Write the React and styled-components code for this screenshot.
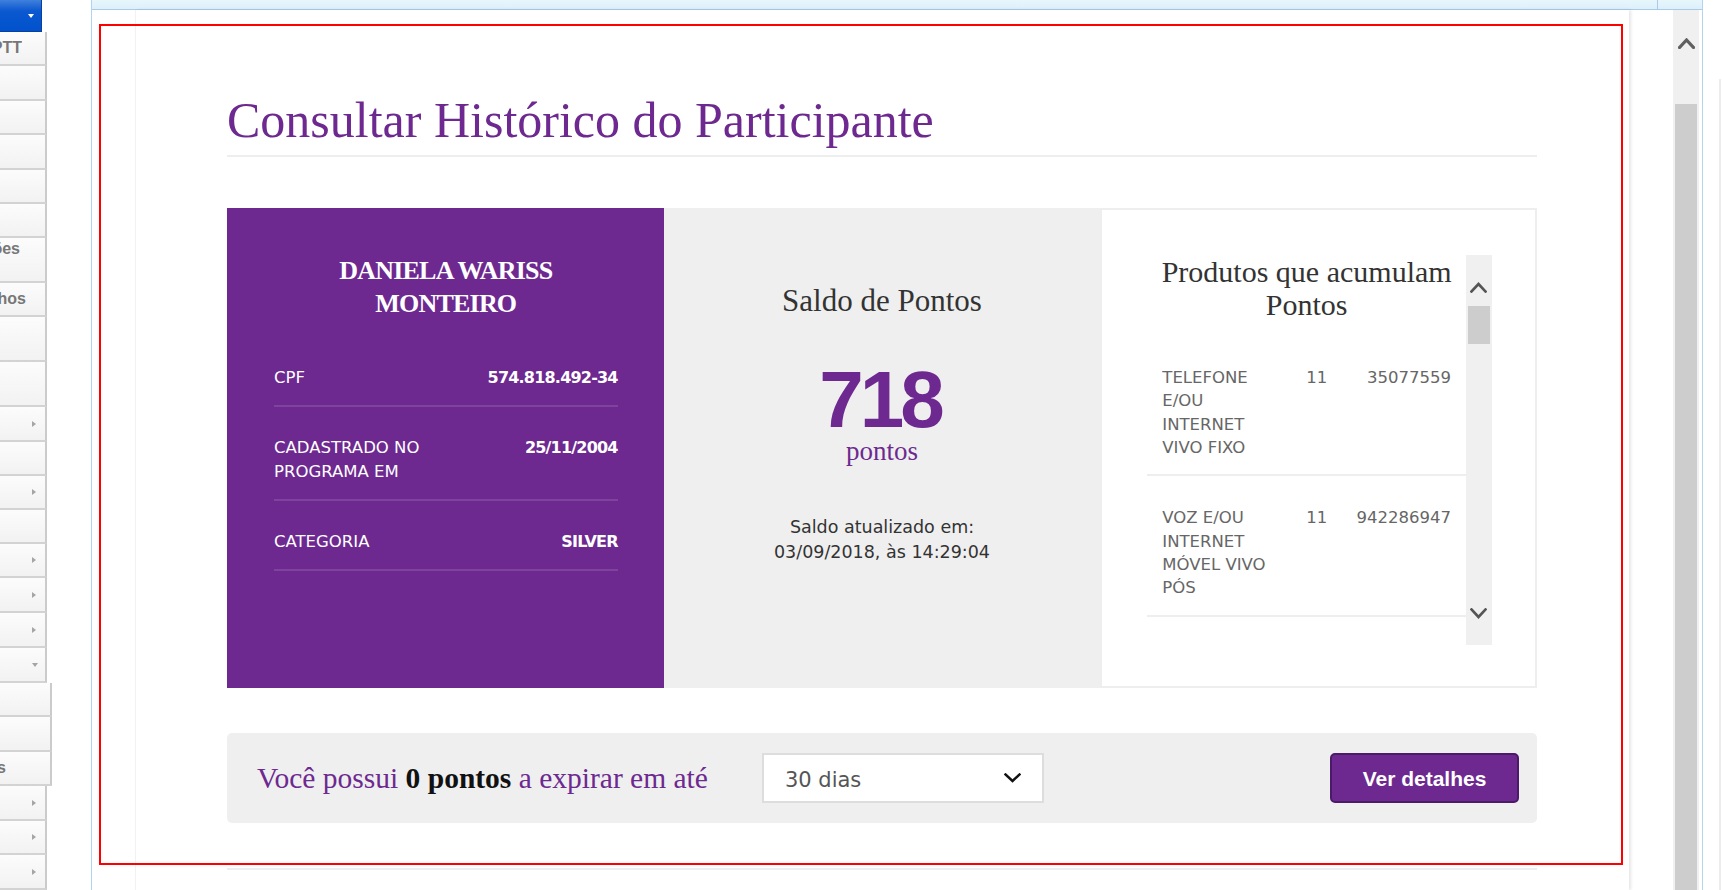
import React from "react";
import styled, { createGlobalStyle } from "styled-components";

const PURPLE = "#6d2990";
const SERIF = `"Liberation Serif", "Times New Roman", serif`;
const SANS = `"DejaVu Sans", Verdana, sans-serif`;
const ARIAL = `"Liberation Sans", Arial, sans-serif`;

const GlobalStyle = createGlobalStyle`
  html, body { margin: 0; padding: 0; background: #fff; }
  body { font-family: ${SANS}; }
  * { box-sizing: border-box; }
`;

const Page = styled.div`
  position: relative;
  display: flex;
  width: 1722px;
  height: 890px;
  overflow: hidden;
  background: #fff;
`;

/* ---------- left menu ---------- */
const Sidebar = styled.nav`
  width: 52px;
  flex: none;
  display: flex;
  flex-direction: column;
  align-items: flex-start;
`;

const MenuButton = styled.div`
  width: 42px;
  height: 32px;
  flex: none;
  background: linear-gradient(#3f80dc, #0b58d0 35%, #0052cc);
  border-right: 1px solid #0a3f9a;
  border-bottom: 1px solid #0a3f9a;
  display: flex;
  justify-content: flex-end;
  align-items: center;
  padding-right: 7px;
`;

const WhiteCaret = styled.span`
  width: 0;
  height: 0;
  border-left: 3.5px solid transparent;
  border-right: 3.5px solid transparent;
  border-top: 4px solid #fff;
  margin-top: 1px;
`;

const MenuItem = styled.div`
  flex: none;
  height: ${(p) => p.$h}px;
  width: ${(p) => (p.$wide ? 52 : 47)}px;
  background: linear-gradient(#fcfcfc, #f2f2f2);
  border-bottom: 2px solid #d3d3d3;
  border-right: 2px solid #cbcbcb;
  display: flex;
  align-items: ${(p) => (p.$top !== undefined ? "flex-start" : "center")};
  padding-top: ${(p) => p.$top || 0}px;
`;

const MenuLabel = styled.span`
  width: ${(p) => p.$w}px;
  flex: none;
  overflow: hidden;
  display: flex;
  justify-content: flex-end;
  white-space: nowrap;
  font: bold 16px/18px ${ARIAL};
  color: #777;
`;

const MenuArrow = styled.span`
  margin-left: auto;
  margin-right: 9px;
  width: 0;
  height: 0;
  border-top: 3.5px solid transparent;
  border-bottom: 3.5px solid transparent;
  border-left: 4px solid #a5a5a5;
`;

const MenuCaret = styled.span`
  margin-left: auto;
  margin-right: 7px;
  width: 0;
  height: 0;
  border-left: 3.5px solid transparent;
  border-right: 3.5px solid transparent;
  border-top: 4px solid #a5a5a5;
`;

/* ---------- frame ---------- */
const Frame = styled.div`
  margin-left: 39px;
  width: 1612px;
  flex: none;
  border-left: 1px solid #b3d3ef;
  border-right: 1px solid #b3d3ef;
  display: flex;
  flex-direction: column;
`;

const FrameTop = styled.div`
  height: 10px;
  flex: none;
  display: flex;
`;

const TopTab = styled.div`
  flex: ${(p) => (p.$end ? "0 0 45px" : "1")};
  background: linear-gradient(#e8f6fc, #dcf0fa);
  border-bottom: 1px solid #a9cbe9;
  border-left: ${(p) => (p.$end ? "1px solid #a9cbe9" : "none")};
`;

const FrameBody = styled.div`
  flex: 1;
  min-height: 0;
  display: flex;
  padding-left: 43px;
`;

const Column = styled.main`
  width: 1494px;
  flex: none;
  border-left: 1px solid #f2f2f2;
  box-shadow: 2px 0 3px rgba(0, 0, 0, 0.1);
  padding: 80px 92px 0 91px;
  display: flex;
  flex-direction: column;
`;

const ColumnGap = styled.div`
  width: 44px;
  flex: none;
`;

const PageScrollbar = styled.div`
  width: 26px;
  flex: none;
  background: #f0f0f0;
  display: flex;
  flex-direction: column;
  align-items: center;
`;

const PageThumb = styled.div`
  width: 22px;
  flex: 1;
  margin-top: 55px;
  background: #cdcdcd;
`;

const RightStrip = styled.div`
  flex: 1;
  padding: 79px 0 0 16px;
  display: flex;
`;

const StripLine = styled.div`
  width: 2px;
  background: #ececec;
`;

/* ---------- content ---------- */
const Title = styled.h1`
  margin: 0;
  font: 50px/60px ${SERIF};
  color: ${PURPLE};
  padding-bottom: 5px;
  border-bottom: 2px solid #eeeeee;
`;

const Cards = styled.div`
  margin-top: 51px;
  height: 480px;
  display: grid;
  grid-template-columns: repeat(3, minmax(0, 1fr));
`;

const ProfileCol = styled.section`
  background: ${PURPLE};
  padding: 46px 46px 0 47px;
  color: #fff;
`;

const ProfileName = styled.h2`
  margin: 0 0 17px;
  font: bold 26px/33px ${SERIF};
  letter-spacing: -0.8px;
  text-align: center;
`;

const InfoRow = styled.div`
  display: flex;
  justify-content: space-between;
  align-items: flex-start;
  padding: 29px 0 15px;
  border-bottom: 2px solid rgba(255, 255, 255, 0.12);
  font: 16.5px/24px ${SANS};
`;

const InfoLabel = styled.span`
  max-width: 170px;
`;

const InfoValue = styled.strong`
  font-weight: bold;
  font-size: 16px;
  letter-spacing: -0.8px;
`;

const BalanceCol = styled.section`
  background: #efefef;
  padding: 75px 20px 0;
  text-align: center;
`;

const BalanceTitle = styled.h3`
  margin: 0;
  font: 31px/35px ${SERIF};
  color: #333;
`;

const BalanceValue = styled.div`
  margin-top: 42px;
  font: bold 80px/80px ${ARIAL};
  letter-spacing: -4px;
  text-indent: -4px;
  color: ${PURPLE};
`;

const BalanceUnit = styled.div`
  margin-top: 1px;
  font: 27px/20px ${SERIF};
  color: ${PURPLE};
`;

const BalanceDate = styled.p`
  margin: 54px 0 0;
  font: 17.5px/25px ${SANS};
  color: #333;
`;

const ProductsCol = styled.section`
  background: #fff;
  border: 2px solid #eeeeee;
  padding: 45px 43px 0 45px;
`;

const ScrollBox = styled.div`
  height: 390px;
  display: flex;
`;

const ScrollContent = styled.div`
  flex: 1;
  min-width: 0;
  overflow: hidden;
`;

const ProductsTitle = styled.h3`
  margin: 0 0 15px;
  font: 30px/33px ${SERIF};
  color: #333;
  text-align: center;
`;

const ProductRow = styled.div`
  display: grid;
  grid-template-columns: 120px auto 1fr;
  column-gap: 24px;
  padding: 30px 15px 15px;
  border-bottom: 2px solid #eeeeee;
  font: 16.5px/23.33px ${SANS};
  color: #666;
`;

const ProductNumber = styled.span`
  text-align: right;
`;

const CardScrollbar = styled.div`
  width: 26px;
  flex: none;
  background: #f0f0f0;
  display: flex;
  flex-direction: column;
  align-items: center;
  padding: 27px 0 26px;
`;

const CardThumb = styled.div`
  width: 22px;
  height: 38px;
  margin-top: 13px;
  background: #cdcdcd;
`;

const ScrollFill = styled.div`
  flex: 1;
`;

const ExpireBar = styled.div`
  margin-top: 45px;
  height: 90px;
  flex: none;
  background: #efefef;
  border-radius: 5px;
  display: flex;
  align-items: center;
  padding: 0 18px 0 30px;
`;

const ExpireText = styled.p`
  margin: 0;
  font: 29.5px/36px ${SERIF};
  color: ${PURPLE};
  white-space: nowrap;

  b {
    color: #111;
  }
`;

const Select = styled.div`
  margin-left: 54px;
  width: 282px;
  height: 50px;
  background: #fff;
  border: 2px solid #dddddd;
  display: flex;
  align-items: center;
  justify-content: space-between;
  padding: 4px 21px 0 21px;
  font: 21px/1 ${SANS};
  color: #555;
`;

const SelectCaret = styled.span`
  margin-top: -4px;
`;

const DetailsButton = styled.button`
  margin-left: auto;
  width: 189px;
  height: 50px;
  background: ${PURPLE};
  border: 2px solid #4b1a68;
  border-radius: 5px;
  color: #fff;
  font: bold 21px/1 ${ARIAL};
  cursor: pointer;
`;

const NextSection = styled.div`
  margin-top: 45px;
  border-top: 2px solid #eeeeee;
`;

const Annotation = styled.div`
  position: absolute;
  left: 99px;
  top: 24px;
  width: 1524px;
  height: 841px;
  border: 2px solid #ff0000;
  pointer-events: none;
`;

const Chevron = ({ up, w = 17, h = 11, color = "#555", sw = 2.6 }) => (
  <svg width={w} height={h} viewBox={`0 0 ${w} ${h}`} style={{ display: "block", flex: "none" }}>
    <polyline
      points={
        up
          ? `1.5,${h - 1.5} ${w / 2},2 ${w - 1.5},${h - 1.5}`
          : `1.5,1.5 ${w / 2},${h - 2} ${w - 1.5},1.5`
      }
      fill="none"
      stroke={color}
      strokeWidth={sw}
      strokeLinecap="square"
    />
  </svg>
);

const PageUp = styled.div`
  margin-top: 28px;
`;

const menu = [
  { h: 34, label: "Consulta PTT", w: 22 },
  { h: 35 },
  { h: 34 },
  { h: 35 },
  { h: 34 },
  { h: 34 },
  { h: 45, label: "Promoções", w: 20, top: 2 },
  { h: 34, label: "Bônus e Ganhos", w: 26 },
  { h: 45 },
  { h: 45 },
  { h: 35, arrow: true },
  { h: 34 },
  { h: 34, arrow: true },
  { h: 34 },
  { h: 34, arrow: true },
  { h: 35, arrow: true },
  { h: 35, arrow: true },
  { h: 35, caret: true },
  { h: 34, wide: true },
  { h: 35, wide: true },
  { h: 34, wide: true, label: "Relatórios", w: 6 },
  { h: 35, arrow: true },
  { h: 34, arrow: true },
  { h: 35, arrow: true },
];

const info = [
  { label: "CPF", value: "574.818.492-34" },
  { label: "CADASTRADO NO PROGRAMA EM", value: "25/11/2004" },
  { label: "CATEGORIA", value: "SILVER" },
];

const products = [
  { name: "TELEFONE E/OU INTERNET VIVO FIXO", ddd: "11", number: "35077559" },
  { name: "VOZ E/OU INTERNET MÓVEL VIVO PÓS", ddd: "11", number: "942286947" },
];

export default function App() {
  return (
    <>
      <GlobalStyle />
      <Page>
        <Sidebar>
          <MenuButton>
            <WhiteCaret />
          </MenuButton>
          {menu.map((m, i) => (
            <MenuItem key={i} $h={m.h} $wide={m.wide} $top={m.top}>
              {m.label && <MenuLabel $w={m.w}>{m.label}</MenuLabel>}
              {m.arrow && <MenuArrow />}
              {m.caret && <MenuCaret />}
            </MenuItem>
          ))}
        </Sidebar>

        <Frame>
          <FrameTop>
            <TopTab />
            <TopTab $end />
          </FrameTop>
          <FrameBody>
            <Column>
              <Title>Consultar Histórico do Participante</Title>

              <Cards>
                <ProfileCol>
                  <ProfileName>
                    DANIELA WARISS
                    <br />
                    MONTEIRO
                  </ProfileName>
                  {info.map((r) => (
                    <InfoRow key={r.label}>
                      <InfoLabel>{r.label}</InfoLabel>
                      <InfoValue>{r.value}</InfoValue>
                    </InfoRow>
                  ))}
                </ProfileCol>

                <BalanceCol>
                  <BalanceTitle>Saldo de Pontos</BalanceTitle>
                  <BalanceValue>718</BalanceValue>
                  <BalanceUnit>pontos</BalanceUnit>
                  <BalanceDate>
                    Saldo atualizado em:
                    <br />
                    03/09/2018, às 14:29:04
                  </BalanceDate>
                </BalanceCol>

                <ProductsCol>
                  <ScrollBox>
                    <ScrollContent>
                      <ProductsTitle>Produtos que acumulam Pontos</ProductsTitle>
                      {products.map((p) => (
                        <ProductRow key={p.number}>
                          <span>{p.name}</span>
                          <span>{p.ddd}</span>
                          <ProductNumber>{p.number}</ProductNumber>
                        </ProductRow>
                      ))}
                    </ScrollContent>
                    <CardScrollbar>
                      <Chevron up />
                      <CardThumb />
                      <ScrollFill />
                      <Chevron />
                    </CardScrollbar>
                  </ScrollBox>
                </ProductsCol>
              </Cards>

              <ExpireBar>
                <ExpireText>
                  Você possui <b>0 pontos</b> a expirar em até
                </ExpireText>
                <Select>
                  <span>30 dias</span>
                  <SelectCaret>
                    <Chevron w={17} h={10} color="#111" sw={2.4} />
                  </SelectCaret>
                </Select>
                <DetailsButton>Ver detalhes</DetailsButton>
              </ExpireBar>

              <NextSection />
            </Column>
            <ColumnGap />
            <PageScrollbar>
              <PageUp>
                <Chevron up w={17} h={11} color="#606060" sw={3.2} />
              </PageUp>
              <PageThumb />
            </PageScrollbar>
          </FrameBody>
        </Frame>

        <RightStrip>
          <StripLine />
        </RightStrip>

        <Annotation />
      </Page>
    </>
  );
}
